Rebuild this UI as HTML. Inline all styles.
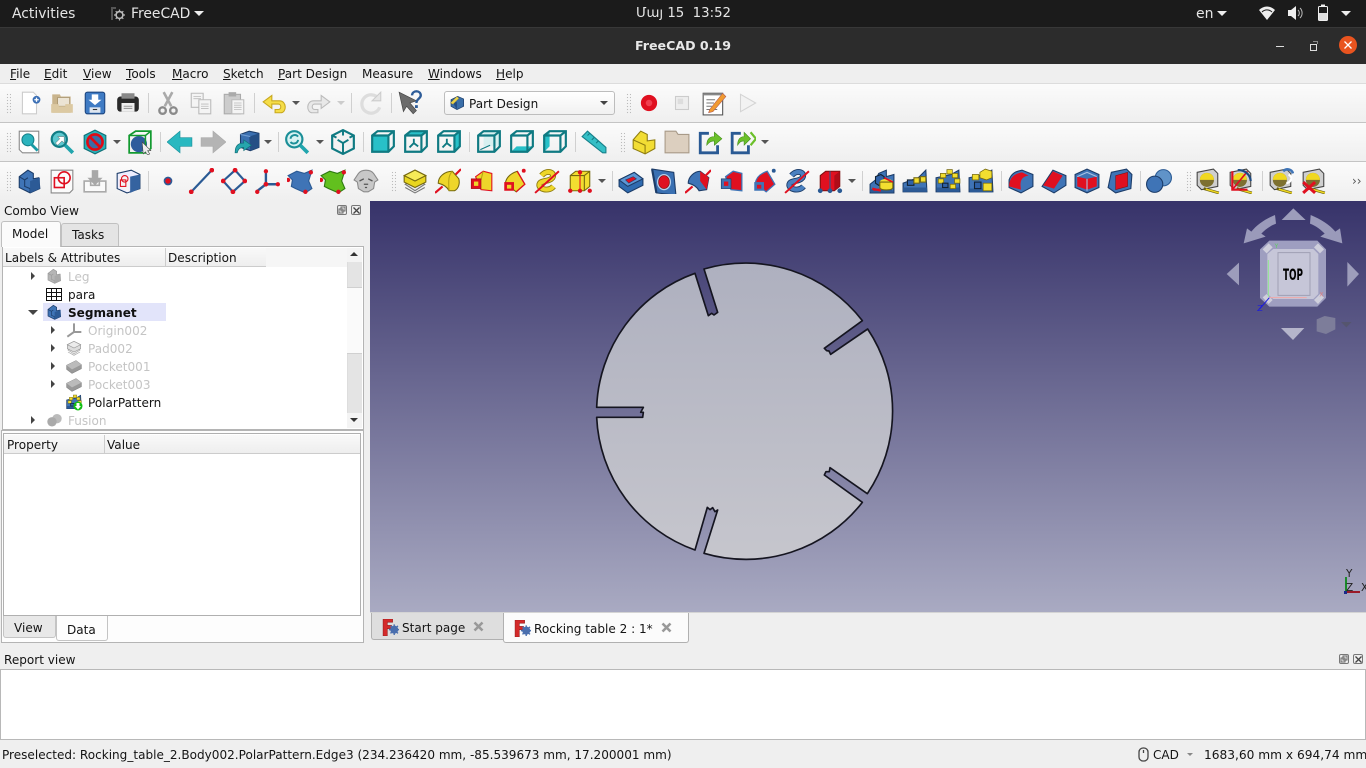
<!DOCTYPE html>
<html><head><meta charset="utf-8"><title>FreeCAD 0.19</title>
<style>
html,body{margin:0;padding:0;width:1366px;height:768px;overflow:hidden;background:#efefef}
body{font-family:"DejaVu Sans","Liberation Sans",sans-serif;font-size:12.05px;color:#141414;position:relative}
div,span.t,svg.a{position:absolute}
.t{position:absolute;white-space:nowrap;line-height:18px;margin-top:1px}
.tb{left:0;width:1366px;background:linear-gradient(#fbfbfb,#efefef);border-bottom:1px solid #c4c4c4;box-sizing:border-box}
svg.i{position:absolute;width:26px;height:26px;overflow:visible}
.g{color:#c4c4c4}
.sep{width:1px;background:#d0d0d0}
.dots{width:5px;background-image:radial-gradient(#bbb 0.7px,transparent 0.8px);background-size:3px 3px}
.ar{width:0;height:0;border-left:4px solid transparent;border-right:4px solid transparent;border-top:4px solid #555}
.ad{border-top-color:#ccc}
.tw{width:0;height:0;border-top:4px solid transparent;border-bottom:4px solid transparent;border-left:4px solid #444}
.td{width:0;height:0;border-left:5px solid transparent;border-right:5px solid transparent;border-top:5px solid #444}
.dk{width:8px;height:8px;border:1px solid #777;border-radius:2px;background:#eee}
</style></head><body>
<svg width="0" height="0" style="position:absolute">
<defs>
<symbol id="new" viewBox="0 0 24 24"><path d="M5 2h10l3 3v17H5z" fill="#fff" stroke="#ccc"/><circle cx="18" cy="9" r="3.6" fill="#3b6fb5"/><path d="M16 9h4M18 7v4" stroke="#fff" stroke-width="1.2"/></symbol>
<symbol id="open" viewBox="0 0 24 24"><path d="M3 21V4h7l1 2h9v15z" fill="#c9b48c"/><path d="M8 7h11v8H8z" fill="#ece4d4" stroke="#a08c66" stroke-width=".6"/><path d="M2 13h7v2h6v-2h7v8H2z" fill="#dcc9a2"/></symbol>
<symbol id="save" viewBox="0 0 24 24"><rect x="3" y="2" width="18" height="20" rx="2" fill="#3f7bc4" stroke="#1d4680"/><path d="M9 4h6v5h3l-6 5-6-5h3z" fill="#fff"/><rect x="7" y="16" width="10" height="5" fill="#dfe6ef"/><path d="M10 18h4" stroke="#333"/></symbol>
<symbol id="print" viewBox="0 0 24 24"><rect x="2" y="6" width="20" height="14" rx="3" fill="#2a2a2a"/><rect x="6" y="3" width="12" height="5" fill="#888"/><rect x="6" y="12" width="12" height="8" fill="#eee"/><path d="M8 15h8M8 17h8" stroke="#999"/></symbol>
<symbol id="cut" viewBox="0 0 24 24" fill="none" stroke="#aaa"><path d="M8 2l7 13M16 2L9 15" stroke-width="2.4"/><circle cx="7" cy="19" r="3" stroke-width="2.2" stroke="#8a8a8a"/><circle cx="17" cy="19" r="3" stroke-width="2.2" stroke="#8a8a8a"/></symbol>
<symbol id="copy" viewBox="0 0 24 24"><path d="M3 3h11v13H3z" fill="#f4f4f4" stroke="#bbb"/><path d="M10 9h11v13H10z" fill="#f4f4f4" stroke="#bbb"/><path d="M5 6h7M5 8h7M12 13h7M12 15h7M12 17h7" stroke="#bbb" stroke-width=".8"/></symbol>
<symbol id="paste" viewBox="0 0 24 24"><rect x="3" y="4" width="15" height="18" fill="#ccc" stroke="#aaa"/><rect x="7" y="2" width="7" height="4" fill="#aaa"/><path d="M10 9h11v13H10z" fill="#f4f4f4" stroke="#bbb"/><path d="M12 12h7M12 14h7M12 16h7M12 18h7" stroke="#bbb" stroke-width=".8"/></symbol>
<symbol id="undo" viewBox="0 0 24 24"><path d="M10 5L2 11l8 6v-4h6c3 0 3 5 0 5h-3v3h5c6 0 6-11-1-11h-7z" fill="#f5dd48" stroke="#c8a81e"/></symbol>
<symbol id="redo" viewBox="0 0 24 24"><path d="M14 5l8 6-8 6v-4H8c-3 0-3 5 0 5h3v3H6c-6 0-6-11 1-11h7z" fill="#e8e8e8" stroke="#bbb"/></symbol>
<symbol id="refresh" viewBox="0 0 24 24"><path d="M19 8a8.5 8.5 0 1 0 1 8" fill="none" stroke="#ddd" stroke-width="3"/><path d="M21 2v8h-8z" fill="#e6e6e6" stroke="#ccc"/></symbol>
<symbol id="help" viewBox="0 0 24 24"><path d="M1 2l16 8-6 2 6 7-3 3-6-7-3 5z" fill="#6b6b6b" stroke="#444" stroke-width=".6"/><path d="M13 5c0-5 8-5 8 0 0 3-4 3-4 7" fill="none" stroke="#2d5c98" stroke-width="2.2"/><rect x="15.7" y="14" width="2.6" height="2.6" fill="#2d5c98"/></symbol>
<symbol id="pd" viewBox="0 0 24 24"><path d="M3 7l10-5 9 4v11l-10 5-9-5z" fill="#3a6ea8" stroke="#1c3c68"/><path d="M3 7l9 4v11" fill="#254f85"/><path d="M2 12L12 2l3 3L6 14z" fill="#ecd44a" stroke="#554"  stroke-width=".6"/></symbol>
<symbol id="rec" viewBox="0 0 24 24"><circle cx="12" cy="12" r="7.5" fill="#e01020"/><circle cx="12" cy="12" r="3" fill="#f04050"/></symbol>
<symbol id="stop" viewBox="0 0 24 24"><rect x="6" y="6" width="12" height="12" fill="#eee" stroke="#ccc"/><rect x="8" y="8" width="5" height="5" fill="#ddd"/></symbol>
<symbol id="macro" viewBox="0 0 24 24"><rect x="2" y="3" width="18" height="20" fill="#fff" stroke="#555"/><path d="M2 3h18v2H2z" fill="#888"/><path d="M5 9h8M5 12h7M5 15h5M5 18h10" stroke="#777"/><path d="M8 18L20 3l3 3L11 20l-4 1z" fill="#f09a30" stroke="#a55" stroke-width=".5"/></symbol>
<symbol id="play" viewBox="0 0 24 24"><path d="M6 4l14 8-14 8z" fill="#f2f2f2" stroke="#d4d4d4"/></symbol>
<symbol id="fitall" viewBox="0 0 24 24"><path d="M3 2h18v20H6l-3-3z" fill="#fdfdfd" stroke="#888"/><circle cx="11" cy="10" r="5.5" fill="#2bb3bd" stroke="#137f88"/><path d="M14 14l6 6" stroke="#1a9aa4" stroke-width="2.6"/></symbol>
<symbol id="fitsel" viewBox="0 0 24 24"><circle cx="9.500" cy="9.500" r="7" fill="#5cc8cf" stroke="#117d85" stroke-width="2"/><path d="M15 15l7 7" stroke="#21a5ad" stroke-width="3.4"/><path d="M6 13l4-4-2-2h6v6l-2-2-4 4z" fill="#fff" stroke="#555" stroke-width=".4"/></symbol>
<symbol id="draw" viewBox="0 0 24 24"><path d="M12 1l10 5v12l-10 5-10-5V6z" fill="#27b0b8" stroke="#106f76"/><circle cx="12" cy="12" r="7" fill="#3a6ea8" stroke="#e00a14" stroke-width="2.4"/><path d="M7 7l10 10" stroke="#e00a14" stroke-width="2.4"/></symbol>
<symbol id="bbox" viewBox="0 0 24 24"><path d="M2 6l6-4h14v16l-5 4H2z" fill="none" stroke="#129a30" stroke-width="1.6"/><circle cx="11" cy="14" r="7.500" fill="#2e5c9c"/><path d="M2 6h15v16M17 6l5-4" fill="none" stroke="#129a30" stroke-width="1.4"/><path d="M14 12l8 8-3 0 2 3-2 1-2-3-2 2z" fill="#eee" stroke="#444" stroke-width=".5"/></symbol>
<symbol id="back" viewBox="0 0 24 24"><path d="M12 2L0 12l12 10v-6h11V8H12z" fill="#29b8c0" stroke="#18909a" stroke-width=".6"/></symbol>
<symbol id="fwd" viewBox="0 0 24 24"><path d="M12 2l12 10-12 10v-6H1V8h11z" fill="#b4b4b4" stroke="#aaa" stroke-width=".6"/></symbol>
<symbol id="sync" viewBox="0 0 24 24"><path d="M6 5l8-3 9 2v13l-8 3-9-3z" fill="#3a6fb0" stroke="#1c3c68"/><path d="M14 7l9-3v13l-8 3z" fill="#254f85"/><path d="M6 5l9 2" stroke="#6f9bd0"/><path d="M1 22c0-8 4-9 8-9v-3l7 5-7 5v-3c-3 0-5 1-6 5z" fill="#26a5ad" stroke="#0f6e75" stroke-width=".6"/></symbol>
<symbol id="zoom" viewBox="0 0 24 24"><circle cx="9.500" cy="9.500" r="7.500" fill="#d8f2f2" stroke="#1b8f98" stroke-width="2"/><path d="M15 15l7 7" stroke="#21a5ad" stroke-width="3.4"/><path d="M6 9a4 4 0 0 1 7-2M13 10a4 4 0 0 1-7 2" fill="none" stroke="#1b8f98" stroke-width="1.8"/></symbol>
<symbol id="iso" viewBox="0 0 24 24"><path d="M12 1l10 5v12l-10 5L2 18V6z" fill="#f2f2f2" stroke="#0f7a82" stroke-width="2"/><path d="M12 1v5M2 6l4 2M22 6l-4 2M12 23v-5M12 13v5M12 13l-5-3M12 13l5-3" stroke="#0f7a82" stroke-width="1.800" fill="none"/></symbol>
<g id="wb"><path d="M2 6l5-4h15v14l-5 5H2zM2 6h15v15M17 6l5-4" fill="none" stroke="#0f7a82" stroke-width="2"/></g>
<g id="ym"><path d="M10 13v-4M10 13l-4 4M10 13l4 3" stroke="#0f7a82" stroke-width="1.700" fill="none"/></g>
<symbol id="front" viewBox="0 0 24 24"><path d="M2 6h15v15H2z" fill="#28c0c8"/><use href="#wb"/></symbol>
<symbol id="top" viewBox="0 0 24 24"><path d="M2 6l5-4h15l-5 4z" fill="#28c0c8"/><use href="#ym"/><use href="#wb"/></symbol>
<symbol id="right" viewBox="0 0 24 24"><path d="M17 6l5-4v14l-5 5z" fill="#28c0c8"/><use href="#ym"/><use href="#wb"/></symbol>
<symbol id="rear" viewBox="0 0 24 24"><path d="M7 2h15v14H7z" fill="#d8f0f0"/><path d="M4 19l9-4" stroke="#0f7a82"/><use href="#wb"/></symbol>
<symbol id="bottom" viewBox="0 0 24 24"><path d="M7 16h15l-5 5H2z" fill="#28c0c8"/><use href="#wb"/></symbol>
<symbol id="left" viewBox="0 0 24 24"><path d="M2 6l5-4v14l-5 5z" fill="#28c0c8"/><use href="#wb"/></symbol>
<symbol id="ruler" viewBox="0 0 24 24"><path d="M1 7l5-5 17 15v5h-3z" fill="#35bfc6" stroke="#17808a"/><path d="M6 6l2-2M10 10l2-2M14 13l2-2" stroke="#147a82"/></symbol>
<symbol id="part" viewBox="0 0 24 24"><path d="M2 10l7-8 6 3v6l7-1v8l-9 5-11-5z" fill="#f2dd34" stroke="#8f7d10"/><path d="M2 10l11 5v8" fill="none" stroke="#8f7d10"/></symbol>
<symbol id="folder" viewBox="0 0 24 24"><path d="M1 22V2h10l2 3h10v17z" fill="#dccfbf" stroke="#a89a88"/></symbol>
<symbol id="link" viewBox="0 0 24 24"><path d="M11 4H3v18h16v-7" fill="none" stroke="#2a5a94" stroke-width="2.600"/><path d="M9 15c0-6 3-8 7-8V3l7 6-7 6v-4c-3 0-5 1-7 4z" fill="#6cc02a" stroke="#3c8a14" stroke-width=".5"/></symbol>
<symbol id="link2" viewBox="0 0 24 24"><path d="M10 4H2v18h15v-7" fill="none" stroke="#2a5a94" stroke-width="2.600"/><path d="M7 15c0-6 3-8 6-8V3l6 6-6 6v-4c-3 0-4 1-6 4z" fill="#6cc02a" stroke="#3c8a14" stroke-width=".5"/><path d="M19 3l5 6-5 6" fill="none" stroke="#6cc02a" stroke-width="2"/></symbol>
<symbol id="body" viewBox="0 0 24 24"><path d="M3 8l8-6 5 3v5l5-1 1 10-9 4-10-5z" fill="#3f74b6" stroke="#1c3c68"/><path d="M3 8l5 3v6l5 2v4M8 11l3-2" fill="none" stroke="#1c3c68"/><path d="M13 12l9-3v10l-9 4z" fill="#2c5a96"/></symbol>
<symbol id="sketch" viewBox="0 0 24 24"><path d="M2 2h20v18l-3 3H2z" fill="#fbfbfb" stroke="#888"/><circle cx="14" cy="9" r="5.500" fill="none" stroke="#e01020" stroke-width="1.500"/><rect x="5" y="9" width="9" height="9" fill="none" stroke="#e01020" stroke-width="1.500"/></symbol>
<symbol id="attach" viewBox="0 0 24 24"><path d="M2 12h6v4h8v-4h6v10H2z" fill="#fafafa" stroke="#aaa" stroke-width="1.500"/><path d="M9 2h6v7h4l-7 7-7-7h4z" fill="#a8a8a8"/></symbol>
<symbol id="map" viewBox="0 0 24 24"><path d="M2 5l13-3 8 4v13l-12 4-9-4z" fill="#eef" stroke="#1c3c68"/><path d="M14 8l9-2v13l-9 4z" fill="#3563a0"/><path d="M4 6l9 3v13l-9-4z" fill="#f4f4f4"/><rect x="5" y="11" width="5" height="6" fill="none" stroke="#e01020"/><circle cx="9" cy="10" r="3" fill="none" stroke="#e01020"/></symbol>
<symbol id="point" viewBox="0 0 24 24"><circle cx="12" cy="12" r="4" fill="#2b5a96"/><circle cx="12" cy="12" r="2.500" fill="#e01020"/></symbol>
<symbol id="line" viewBox="0 0 24 24"><path d="M3 22L22 2" stroke="#2a5a94" stroke-width="2"/><circle cx="3" cy="22" r="2.200" fill="#e01020"/><circle cx="22" cy="2" r="2.200" fill="#e01020"/></symbol>
<symbol id="plane" viewBox="0 0 24 24"><path d="M2 12L13 2l9 10-11 10z" fill="none" stroke="#2a5a94" stroke-width="2"/><circle cx="2" cy="12" r="2.200" fill="#e01020"/><circle cx="13" cy="2" r="2.200" fill="#e01020"/><circle cx="22" cy="12" r="2.200" fill="#e01020"/><circle cx="11" cy="22" r="2.200" fill="#e01020"/></symbol>
<symbol id="lcs" viewBox="0 0 24 24"><path d="M11 2v13L2 22M11 15h11" fill="none" stroke="#2a5a94" stroke-width="2.200"/><circle cx="11" cy="3" r="2" fill="#e01020"/><circle cx="11" cy="15" r="2.200" fill="#e01020"/><circle cx="22" cy="15" r="2" fill="#e01020"/><circle cx="3" cy="22" r="2" fill="#e01020"/></symbol>
<symbol id="binder" viewBox="0 0 24 24"><path d="M1 7l8-4 7 2 7-3-3 10 3 7-6 4-9-4-4-2 1-6z" fill="#3f74b6" stroke="#2a5a94"/><circle cx="22" cy="4" r="2" fill="#e01020"/><circle cx="1" cy="11" r="2" fill="#e01020"/><circle cx="17" cy="22" r="2" fill="#e01020"/></symbol>
<symbol id="sub" viewBox="0 0 24 24"><path d="M1 7l8-4 7 2 7-3-3 10 3 7-6 4-9-4-4-2 1-6z" fill="#62c01e" stroke="#2d7a10"/><circle cx="22" cy="4" r="2" fill="#e01020"/><circle cx="1" cy="11" r="2" fill="#e01020"/><circle cx="17" cy="22" r="2" fill="#e01020"/></symbol>
<symbol id="clone" viewBox="0 0 24 24"><path d="M5 5c3-4 11-4 14 0l4 6-3 2-1 6-5 3h-4l-5-3-1-6-3-2z" fill="#c8c8c8" stroke="#8a8a8a"/><path d="M6 12l4-2M18 12l-4-2M10 15h4M11 18h2" stroke="#555" stroke-width="1.200"/></symbol>
<g id="pad0"><path d="M3 15l9-5 9 5-9 6z" fill="#e8e8e8" stroke="#777"/><path d="M3 18l9 5 9-5" fill="none" stroke="#777"/></g>
<symbol id="pad" viewBox="0 0 24 24"><use href="#pad0"/><path d="M2 7l10-5 10 5v6l-10 5-10-5z" fill="#e8d520" stroke="#75680e"/><path d="M2 7l10 5 10-5-10-5z" fill="#f6ea58" stroke="#75680e"/></symbol>
<symbol id="rev" viewBox="0 0 24 24"><path d="M3 14C3 8 9 3 16 3l6 7c1 4 0 9-4 11h-5c-2-4-6-6-10-7z" fill="#eed62a" stroke="#75680e"/><path d="M16 3c-3 3-4 7-3 18" fill="none" stroke="#b8a414"/><path d="M0 23l7-6M19 6l5-5" stroke="#e01020" stroke-width="2"/></symbol>
<symbol id="loft" viewBox="0 0 24 24"><path d="M7 8l7-5 8 2v16l-10-1z" fill="#eed62a" stroke="#e01020"/><path d="M14 3l-2 8" stroke="#b8a414"/><rect x="3" y="10" width="9" height="9" fill="#e01020" stroke="#a00c18" stroke-width=".6"/><rect x="5.500" y="12.500" width="4" height="4" fill="#eed62a"/></symbol>
<symbol id="pipe" viewBox="0 0 24 24"><path d="M4 14C5 8 9 5 15 3l7 12-8 7z" fill="#eed62a" stroke="#75680e"/><path d="M15 3l7 12-8 7" fill="none" stroke="#e01020" stroke-width="1.200"/><rect x="3" y="13" width="9" height="8" fill="#e01020"/><rect x="5.500" y="15.500" width="4" height="3.500" fill="#eed62a"/><circle cx="21" cy="2.500" r="1.800" fill="#e01020"/></symbol>
<symbol id="helix" viewBox="0 0 24 24"><path d="M7 7C12 1 20 4 17 9 14 13 6 11 5 15c-1 5 9 7 13 2" fill="none" stroke="#8f7d10" stroke-width="5.500"/><path d="M7 7C12 1 20 4 17 9 14 13 6 11 5 15c-1 5 9 7 13 2" fill="none" stroke="#eed62a" stroke-width="3.800"/><path d="M1 23L23 3" stroke="#e01020" stroke-width="1.800"/></symbol>
<symbol id="prim" viewBox="0 0 24 24"><path d="M3 7l5-4h13v14l-5 4H3z" fill="#f2de30" stroke="#75680e"/><path d="M3 7h13v14M16 7l5-4" fill="none" stroke="#75680e"/><path d="M12 3v18" stroke="#e01020"/><circle cx="12" cy="4" r="2" fill="#e01020"/><circle cx="3" cy="21" r="2" fill="#e01020"/><circle cx="12" cy="21" r="2" fill="#e01020"/><circle cx="21" cy="21" r="2" fill="#e01020"/></symbol>
<symbol id="pocket" viewBox="0 0 24 24"><path d="M1 11l14-7 8 6v6L9 23 1 17z" fill="#2f6bb0" stroke="#1c3c68"/><path d="M1 11l8 6 14-7-8-6z" fill="#5c96d4" stroke="#1c3c68"/><path d="M7 11l7-3 3 2-7 4z" fill="#e01020" stroke="#1c3c68" stroke-width=".5"/></symbol>
<symbol id="hole" viewBox="0 0 24 24"><path d="M1 1l20 3 2 21-18-2z" fill="#3a70b2" stroke="#1c3c68"/><path d="M1 1l4 22" stroke="#1c3c68" stroke-width="2"/><ellipse cx="12" cy="13" rx="6.500" ry="7.500" fill="#b8d0ea"/><ellipse cx="12" cy="13" rx="5" ry="6" fill="#e01020" stroke="#7a1010" stroke-width=".6"/></symbol>
<symbol id="groove" viewBox="0 0 24 24"><path d="M3 14C3 8 9 3 14 3l8 6-2 11-7 1c-2-4-6-6-10-7z" fill="#3f74b6" stroke="#1c3c68"/><path d="M14 3l8 6-2 11-6-8z" fill="#e01020"/><path d="M0 23l7-6M19 7l5-5" stroke="#e01020" stroke-width="2"/></symbol>
<symbol id="sloft" viewBox="0 0 24 24"><path d="M7 8l7-5 8 2v16l-10-1z" fill="#e01020" stroke="#3f74b6" stroke-width="1.200"/><rect x="3" y="10" width="9" height="9" fill="#3f74b6" stroke="#1c3c68" stroke-width=".6"/><rect x="5.500" y="12.500" width="4" height="4" fill="#e01020"/></symbol>
<symbol id="spipe" viewBox="0 0 24 24"><path d="M4 14C5 8 9 5 15 3l7 12-8 7z" fill="#e01020" stroke="#3f74b6" stroke-width="1.200"/><rect x="3" y="13" width="9" height="8" fill="#3f74b6"/><rect x="5.500" y="15.500" width="4" height="3.500" fill="#e01020"/><circle cx="21" cy="2.500" r="1.800" fill="#2a5a94"/></symbol>
<symbol id="shelix" viewBox="0 0 24 24"><path d="M7 7C12 1 20 4 17 9 14 13 6 11 5 15c-1 5 9 7 13 2" fill="none" stroke="#1c3c68" stroke-width="5.500"/><path d="M7 7C12 1 20 4 17 9 14 13 6 11 5 15c-1 5 9 7 13 2" fill="none" stroke="#4a80c0" stroke-width="3.800"/><path d="M1 23L23 3" stroke="#e01020" stroke-width="1.800"/></symbol>
<symbol id="sprim" viewBox="0 0 24 24"><path d="M3 7l5-4h13v14l-5 4H3z" fill="#e01020" stroke="#7a1010"/><path d="M16 7l5-4v14l-5 4z" fill="#b00c18"/><path d="M12 3v18" stroke="#2a5a94"/><circle cx="3" cy="21" r="2.200" fill="#2a5a94"/><circle cx="12" cy="21" r="2.200" fill="#2a5a94"/><circle cx="21" cy="21" r="2.200" fill="#2a5a94"/></symbol>
<g id="blk"><path d="M1 23V15l5-4 3-6 7-3v6l7-2v17l-9 0z" fill="#3f74b6" stroke="#1c3c68"/><path d="M1 19l10 1 6-4 6 6H1z" fill="#2c5a96"/></g>
<symbol id="mirror" viewBox="0 0 24 24"><use href="#blk"/><path d="M3 19l8 2M4 20h6" stroke="#e01020" stroke-width="2"/><path d="M6 8l5-2 3 2v6l-5 2-3-2z" fill="#2f62a8" stroke="#123"/><ellipse cx="16" cy="13" rx="6" ry="3" fill="#f2de30"/><path d="M10 13v5c0 3 12 3 12 0v-5z" fill="#f2de30" stroke="#75680e"/><path d="M14 9l8 4" stroke="#e01020" stroke-width="1.500"/></symbol>
<symbol id="linear" viewBox="0 0 24 24"><path d="M1 14l14-5 7-7 1 20H1z" fill="#3f74b6" stroke="#1c3c68"/><path d="M1 18l22 0v4H1z" fill="#2c5a96"/><rect x="5" y="11" width="6" height="5" fill="#2f62a8" stroke="#123"/><rect x="11" y="9" width="5" height="5" fill="#f2de30" stroke="#75680e"/><rect x="17" y="8" width="5" height="5" fill="#f2de30" stroke="#75680e"/></symbol>
<symbol id="polar" viewBox="0 0 24 24"><path d="M1 9l14-3 7-4 1 20H1z" fill="#3f74b6" stroke="#1c3c68"/><rect x="1.500" y="18" width="21" height="4" fill="#2c5a96"/><g fill="#f2de30" stroke="#75680e" stroke-width=".7"><rect x="11" y="1.500" width="5" height="4"/><rect x="5" y="5" width="5" height="4"/><rect x="16" y="5" width="5" height="4"/><rect x="3" y="10" width="5" height="4"/><rect x="18" y="10" width="5" height="4"/><rect x="14" y="15" width="5" height="4"/></g><rect x="7" y="14" width="5" height="4" fill="#2f62a8" stroke="#123"/></symbol>
<symbol id="multi" viewBox="0 0 24 24"><path d="M1 9l14-3 7-4 1 20H1z" fill="#3f74b6" stroke="#1c3c68"/><rect x="1.500" y="19" width="21" height="3.500" fill="#2c5a96"/><g fill="#f2de30" stroke="#75680e" stroke-width=".7"><path d="M11 4l5-3 6 2v6l-5 2-6-2z"/><rect x="4" y="6" width="6" height="5"/><rect x="14" y="14" width="8" height="7"/></g><rect x="6" y="13" width="6" height="6" fill="#2f62a8" stroke="#123"/></symbol>
<symbol id="fillet" viewBox="0 0 24 24"><path d="M1 11c2-6 6-8 12-9l10 4v11l-11 6-11-5z" fill="#3f74b6" stroke="#1c3c68"/><path d="M1 17c0-8 5-12 12-13l6 3C11 8 11 14 12 20z" fill="#e01020"/></symbol>
<symbol id="chamfer" viewBox="0 0 24 24"><path d="M1 17L11 2l12 5v9l-11 7z" fill="#3f74b6" stroke="#1c3c68"/><path d="M2 16L11 3l9 4-8 12z" fill="#e01020"/></symbol>
<symbol id="draft" viewBox="0 0 24 24"><path d="M1 6l11-5 11 5v12l-11 5-11-5z" fill="#3f74b6" stroke="#1c3c68"/><path d="M3 8l9 2 9-2v9l-9 3-9-3z" fill="#e01020"/><path d="M12 10v11M3 8l9-4 9 4" stroke="#a8c2e4" fill="none"/></symbol>
<symbol id="thick" viewBox="0 0 24 24"><path d="M4 4l14-3 5 5-1 13-14 4-7-5z" fill="#3f74b6" stroke="#1c3c68"/><path d="M8 7l11-3 0 13-11 3z" fill="#e01020" stroke="#7a1010" stroke-width=".5"/></symbol>
<symbol id="bool" viewBox="0 0 24 24"><circle cx="16" cy="9" r="7.500" fill="#6093c8" stroke="#2a5a94"/><circle cx="8" cy="15" r="7.500" fill="#3f74b6" stroke="#1c3c68"/></symbol>
<g id="tape"><path d="M2 4l15-3 4 4v12l-15 3-4-4z" fill="#cfcfcf" stroke="#444"/><circle cx="11" cy="11" r="6.500" fill="#7d7030"/><path d="M4.500 11a6.500 6.500 0 0 1 13 0z" fill="#f0d820"/><path d="M8 19l14 4" stroke="#6a6010" stroke-width="2.600"/><path d="M10 19.500l12 3.500" stroke="#f0d820" stroke-width="1.400"/></g>
<symbol id="m1" viewBox="0 0 24 24"><use href="#tape"/></symbol>
<symbol id="m2" viewBox="0 0 24 24"><use href="#tape"/><path d="M4 3v17h14" fill="none" stroke="#e01020" stroke-width="2"/><path d="M4 20L18 3" stroke="#e01020" stroke-width="1.500"/><path d="M9 2a11 11 0 0 1 12 10" fill="none" stroke="#1c4a82" stroke-width="2"/></symbol>
<symbol id="m3" viewBox="0 0 24 24"><use href="#tape"/><path d="M14 3c3-3 8-2 9 2" fill="none" stroke="#3f74b6" stroke-width="2.400"/><path d="M19 6c4 2 3 7-2 8" fill="none" stroke="#fff" stroke-width="2"/></symbol>
<symbol id="m4" viewBox="0 0 24 24"><use href="#tape"/><path d="M2 13l11 10M13 13L2 23" stroke="#e01020" stroke-width="2.800"/></symbol>
<symbol id="fc" viewBox="0 0 16 16"><path d="M1 0h9v3H5v3h4v3H5v7H1z" fill="#d42a2a" stroke="#8e1616" stroke-width=".5"/><circle cx="11.500" cy="10" r="3.800" fill="#4a6fae"/><circle cx="11.500" cy="10" r="1.400" fill="#dbe4f2"/><path d="M11.500 5v10M6.500 10h10M8 6.500l7 7M15 6.500l-7 7" stroke="#4a6fae" stroke-width="1.300"/></symbol>
</defs></svg>

<!-- top bar -->
<div style="left:0;top:0;width:1366px;height:27px;background:#1b1b1b;border-bottom:1px solid #383838"></div>
<span class="t" style="left:12px;top:4px;color:#e6e6e6;font-size:13.900px">Activities</span>
<svg class="a" style="left:110px;top:6px" width="16" height="16" viewBox="0 0 16 16"><path d="M1 1h5v2H3v11H1z" fill="#555"/><circle cx="9.500" cy="9" r="3.400" fill="none" stroke="#bbb" stroke-width="1.600"/><path d="M9.500 3.500v2M9.500 12.500v2M4 9h2M13 9h2M5.700 5.200l1.300 1.300M12 11.500l1.300 1.300M13.300 5.200L12 6.500M7 11.500l-1.300 1.300" stroke="#bbb" stroke-width="1.200"/></svg>
<span class="t" style="left:131px;top:4px;color:#e6e6e6;font-size:13.900px">FreeCAD</span>
<div style="left:194px;top:11px;width:0;height:0;border-left:5px solid transparent;border-right:5px solid transparent;border-top:5px solid #eee"></div>
<span class="t" style="left:636px;top:4px;color:#e6e6e6;font-size:13.300px">Մայ 15&nbsp; 13:52</span>
<span class="t" style="left:1196px;top:4px;color:#e6e6e6;font-size:14px">en</span>
<div style="left:1217px;top:11px;width:0;height:0;border-left:5px solid transparent;border-right:5px solid transparent;border-top:5px solid #eee"></div>
<svg class="a" style="left:1258px;top:5px" width="18" height="16" viewBox="0 0 18 16"><path d="M1 5a11 11 0 0 1 16 0l-8 10z" fill="#eee"/><path d="M4 7a7 7 0 0 1 10 0" stroke="#1b1b1b" stroke-width="1" fill="none"/></svg>
<svg class="a" style="left:1287px;top:5px" width="16" height="16" viewBox="0 0 16 16"><path d="M1 5h3l5-4v14l-5-4H1z" fill="#eee"/><path d="M11 5a4 4 0 0 1 0 6M13 3a7 7 0 0 1 0 10" stroke="#bbb" fill="none"/></svg>
<svg class="a" style="left:1317px;top:4px" width="12" height="18" viewBox="0 0 12 18"><rect x="1.500" y="2.500" width="9" height="14" rx="1" fill="none" stroke="#eee"/><rect x="4" y="0.500" width="4" height="2" fill="#eee"/><rect x="2" y="9" width="8" height="7" fill="#ddd"/></svg>
<div style="left:1341px;top:11px;width:0;height:0;border-left:5px solid transparent;border-right:5px solid transparent;border-top:5px solid #eee"></div>

<!-- title bar -->
<div style="left:0;top:28px;width:1366px;height:36px;background:#2c2c2c"></div>
<span class="t" style="left:635px;top:36px;color:#e8e8e8;font-size:12.600px;font-weight:bold">FreeCAD 0.19</span>
<div style="left:1276px;top:46px;width:8px;height:1px;background:#ddd"></div>
<div style="left:1310px;top:44px;width:5px;height:5px;border:1px solid #ddd"></div>
<div style="left:1313px;top:41px;width:4px;height:2px;border:1px solid #888;border-bottom:none;border-left:none"></div>
<div style="left:1339px;top:36px;width:18px;height:18px;border-radius:9px;background:#e9541f"></div>
<svg class="a" style="left:1339px;top:36px" width="18" height="18"><path d="M5.500 5.500l7 7M12.500 5.500l-7 7" stroke="#fff" stroke-width="1.300"/></svg>

<!-- menu bar -->
<div style="left:0;top:64px;width:1366px;height:20px;background:#efefef;border-bottom:1px solid #dcdcdc;box-sizing:border-box"></div>
<span class="t" style="left:10px;top:64px"><u>F</u>ile</span>
<span class="t" style="left:44px;top:64px"><u>E</u>dit</span>
<span class="t" style="left:83px;top:64px"><u>V</u>iew</span>
<span class="t" style="left:126px;top:64px"><u>T</u>ools</span>
<span class="t" style="left:172px;top:64px"><u>M</u>acro</span>
<span class="t" style="left:223px;top:64px"><u>S</u>ketch</span>
<span class="t" style="left:278px;top:64px"><u>P</u>art Design</span>
<span class="t" style="left:362px;top:64px">Measure</span>
<span class="t" style="left:428px;top:64px"><u>W</u>indows</span>
<span class="t" style="left:496px;top:64px"><u>H</u>elp</span>

<!-- toolbars -->
<div class="tb" style="top:84px;height:39px"></div>
<div class="tb" style="top:123px;height:39px"></div>
<div class="tb" style="top:162px;height:39px;border-bottom:none"></div>
<div class="dots" style="left:6px;top:93px;height:21px"></div>
<div class="dots" style="left:6px;top:132px;height:21px"></div>
<div class="dots" style="left:6px;top:171px;height:21px"></div>
<div class="sep" style="left:148px;top:93px;height:20px"></div>
<div class="sep" style="left:254px;top:93px;height:20px"></div>
<div class="sep" style="left:351px;top:93px;height:20px"></div>
<div class="sep" style="left:391px;top:93px;height:20px"></div>
<div class="dots" style="left:626px;top:93px;height:21px"></div>
<div class="sep" style="left:160px;top:132px;height:20px"></div>
<div class="sep" style="left:278px;top:132px;height:20px"></div>
<div class="sep" style="left:363px;top:132px;height:20px"></div>
<div class="sep" style="left:469px;top:132px;height:20px"></div>
<div class="sep" style="left:575px;top:132px;height:20px"></div>
<div class="dots" style="left:620px;top:132px;height:21px"></div>
<div class="sep" style="left:148px;top:171px;height:20px"></div>
<div class="dots" style="left:391px;top:171px;height:21px"></div>
<div class="sep" style="left:612px;top:171px;height:20px"></div>
<div class="sep" style="left:862px;top:171px;height:20px"></div>
<div class="sep" style="left:1001px;top:171px;height:20px"></div>
<div class="sep" style="left:1140px;top:171px;height:20px"></div>
<div class="dots" style="left:1186px;top:171px;height:21px"></div>
<div class="sep" style="left:1262px;top:171px;height:20px"></div>

<!-- row 1 icons -->
<svg class="i" style="left:17px;top:90px"><use href="#new"/></svg>
<svg class="i" style="left:49px;top:90px"><use href="#open"/></svg>
<svg class="i" style="left:82px;top:90px"><use href="#save"/></svg>
<svg class="i" style="left:115px;top:90px"><use href="#print"/></svg>
<svg class="i" style="left:155px;top:90px"><use href="#cut"/></svg>
<svg class="i" style="left:188px;top:90px"><use href="#copy"/></svg>
<svg class="i" style="left:221px;top:90px"><use href="#paste"/></svg>
<svg class="i" style="left:261px;top:90px"><use href="#undo"/></svg>
<div class="ar" style="left:292px;top:101px"></div>
<svg class="i" style="left:306px;top:90px"><use href="#redo"/></svg>
<div class="ar ad" style="left:337px;top:101px"></div>
<svg class="i" style="left:358px;top:90px"><use href="#refresh"/></svg>
<svg class="i" style="left:398px;top:90px"><use href="#help"/></svg>
<div style="left:444px;top:91px;width:171px;height:24px;box-sizing:border-box;border:1px solid #bdbdbd;border-radius:3px;background:linear-gradient(#fff,#f1f1f1)"></div>
<svg class="a" style="left:449px;top:95px" width="16" height="16"><use href="#pd"/></svg>
<span class="t" style="left:469px;top:94px">Part Design</span>
<div class="ar" style="left:600px;top:101px;border-top-color:#444"></div>
<svg class="i" style="left:636px;top:90px"><use href="#rec"/></svg>
<svg class="i" style="left:669px;top:90px"><use href="#stop"/></svg>
<svg class="i" style="left:701px;top:90px"><use href="#macro"/></svg>
<svg class="i" style="left:734px;top:90px"><use href="#play"/></svg>

<!-- row 2 icons -->
<svg class="i" style="left:16px;top:129px"><use href="#fitall"/></svg>
<svg class="i" style="left:49px;top:129px"><use href="#fitsel"/></svg>
<svg class="i" style="left:82px;top:129px"><use href="#draw"/></svg>
<div class="ar" style="left:113px;top:140px"></div>
<svg class="i" style="left:127px;top:129px"><use href="#bbox"/></svg>
<svg class="i" style="left:167px;top:129px"><use href="#back"/></svg>
<svg class="i" style="left:200px;top:129px"><use href="#fwd"/></svg>
<svg class="i" style="left:234px;top:129px"><use href="#sync"/></svg>
<div class="ar" style="left:264px;top:140px"></div>
<svg class="i" style="left:284px;top:129px"><use href="#zoom"/></svg>
<div class="ar" style="left:316px;top:140px"></div>
<svg class="i" style="left:330px;top:129px"><use href="#iso"/></svg>
<svg class="i" style="left:370px;top:129px"><use href="#front"/></svg>
<svg class="i" style="left:403px;top:129px"><use href="#top"/></svg>
<svg class="i" style="left:436px;top:129px"><use href="#right"/></svg>
<svg class="i" style="left:476px;top:129px"><use href="#rear"/></svg>
<svg class="i" style="left:509px;top:129px"><use href="#bottom"/></svg>
<svg class="i" style="left:542px;top:129px"><use href="#left"/></svg>
<svg class="i" style="left:581px;top:129px"><use href="#ruler"/></svg>
<svg class="i" style="left:631px;top:129px"><use href="#part"/></svg>
<svg class="i" style="left:664px;top:129px"><use href="#folder"/></svg>
<svg class="i" style="left:697px;top:129px"><use href="#link"/></svg>
<svg class="i" style="left:730px;top:129px"><use href="#link2"/></svg>
<div class="ar" style="left:761px;top:140px"></div>

<!-- row 3 icons -->
<svg class="i" style="left:16px;top:168px"><use href="#body"/></svg>
<svg class="i" style="left:49px;top:168px"><use href="#sketch"/></svg>
<svg class="i" style="left:82px;top:168px"><use href="#attach"/></svg>
<svg class="i" style="left:115px;top:168px"><use href="#map"/></svg>
<svg class="i" style="left:155px;top:168px"><use href="#point"/></svg>
<svg class="i" style="left:188px;top:168px"><use href="#line"/></svg>
<svg class="i" style="left:221px;top:168px"><use href="#plane"/></svg>
<svg class="i" style="left:254px;top:168px"><use href="#lcs"/></svg>
<svg class="i" style="left:287px;top:168px"><use href="#binder"/></svg>
<svg class="i" style="left:320px;top:168px"><use href="#sub"/></svg>
<svg class="i" style="left:353px;top:168px"><use href="#clone"/></svg>
<svg class="i" style="left:402px;top:168px"><use href="#pad"/></svg>
<svg class="i" style="left:435px;top:168px"><use href="#rev"/></svg>
<svg class="i" style="left:468px;top:168px"><use href="#loft"/></svg>
<svg class="i" style="left:501px;top:168px"><use href="#pipe"/></svg>
<svg class="i" style="left:534px;top:168px"><use href="#helix"/></svg>
<svg class="i" style="left:567px;top:168px"><use href="#prim"/></svg>
<div class="ar" style="left:598px;top:179px"></div>
<svg class="i" style="left:618px;top:168px"><use href="#pocket"/></svg>
<svg class="i" style="left:651px;top:168px"><use href="#hole"/></svg>
<svg class="i" style="left:685px;top:168px"><use href="#groove"/></svg>
<svg class="i" style="left:718px;top:168px"><use href="#sloft"/></svg>
<svg class="i" style="left:751px;top:168px"><use href="#spipe"/></svg>
<svg class="i" style="left:784px;top:168px"><use href="#shelix"/></svg>
<svg class="i" style="left:817px;top:168px"><use href="#sprim"/></svg>
<div class="ar" style="left:848px;top:179px"></div>
<svg class="i" style="left:869px;top:168px"><use href="#mirror"/></svg>
<svg class="i" style="left:902px;top:168px"><use href="#linear"/></svg>
<svg class="i" style="left:935px;top:168px"><use href="#polar"/></svg>
<svg class="i" style="left:968px;top:168px"><use href="#multi"/></svg>
<svg class="i" style="left:1008px;top:168px"><use href="#fillet"/></svg>
<svg class="i" style="left:1041px;top:168px"><use href="#chamfer"/></svg>
<svg class="i" style="left:1074px;top:168px"><use href="#draft"/></svg>
<svg class="i" style="left:1107px;top:168px"><use href="#thick"/></svg>
<svg class="i" style="left:1146px;top:168px"><use href="#bool"/></svg>
<svg class="i" style="left:1195px;top:168px"><use href="#m1"/></svg>
<svg class="i" style="left:1228px;top:168px"><use href="#m2"/></svg>
<svg class="i" style="left:1268px;top:168px"><use href="#m3"/></svg>
<svg class="i" style="left:1301px;top:168px"><use href="#m4"/></svg>
<span class="t" style="left:1352px;top:171px;color:#555;font-size:12px">››</span>

<!-- 3D viewport -->
<div style="left:370px;top:201px;width:996px;height:411px;background:linear-gradient(#37336a,#a9aac2)"></div>
<svg class="a" style="left:590px;top:255px" width="310" height="310" viewBox="0 0 930 930">
<defs><linearGradient id="dg" x1="0" y1="0" x2="0" y2="1"><stop offset="0" stop-color="#aeb0bf"/><stop offset="1" stop-color="#c6c6cd"/></linearGradient></defs>
<path d="M342 42A443 443 0 0 1 817 197L703 280L710 287L717 288L722 298L833 222A443 443 0 0 1 832 716L720 638L718 650L708 650L703 660L817 742A443 443 0 0 1 342 895L383 765L375 770L368 758L360 764L352 757L315 885A443 443 0 0 1 20 487L158 487L160 472L152 472L160 457L20 457A443 443 0 0 1 315 55L355 182L365 175L372 180L383 172Z" fill="url(#dg)" stroke="#151520" stroke-width="5" stroke-linejoin="round"/>
</svg>

<!-- nav cube -->
<svg class="a" style="left:860px;top:120px" width="506" height="240" viewBox="0 0 1518 720">
<g fill="#9d9dbb">
<path d="M1300 265l-35 35h72z"/>
<path d="M1100 462l37-34v68z"/>
<path d="M1497 462l-35-36v74z"/>
<path d="M1263 624h70l-34 36z" fill="#b5b5cb"/>
<path d="M1245 285l3 26c-20 8-32 18-44 30l13 9-66 20 10-45 13 10c18-22 42-38 71-50z" fill="#9a9aba"/>
<path d="M1352 285l-2 26c20 8 32 18 44 30l-13 9 66 20-7-45-14 10c-18-22-45-38-74-50z" fill="#9a9aba"/>
</g>
<path d="M1228 362h144l26 26v146l-26 26h-144l-28-26V388z" fill="#9e9ec0"/>
<path d="M1240 387h120l15 15v120l-15 15h-120l-18-15V402z" fill="#c6c6d8"/>
<path d="M1254 398h96v128h-96z" fill="none" stroke="#a0a0b4" stroke-width="3"/>
<g fill="#cfcfdc"><path d="M1208 388l18-18 12 12-18 18z"/><path d="M1392 388l-18-18-12 12 18 18z"/><path d="M1208 532l18 20 12-12-18-18z"/><path d="M1392 532l-18 20-12-12 18-18z"/></g>
<path d="M1225 420v110" stroke="#8fe88f" stroke-width="3"/>
<path d="M1228 533h112" stroke="#f0a8a8" stroke-width="3"/>
<path d="M1228 533l-30 35" stroke="#1a1ae0" stroke-width="3"/>
<path d="M1193 556h14l-14 16h14" stroke="#1a1ae0" fill="none" stroke-width="2"/>
<text x="1244" y="384" fill="#60d060" font-size="18" font-family="DejaVu Sans">Y</text>
<text x="1378" y="530" fill="#e08080" font-size="18" font-family="DejaVu Sans">X</text>
<text x="1269" y="480" font-family="'DejaVu Sans','Liberation Sans',sans-serif" font-size="49" font-weight="bold" textLength="60" lengthAdjust="spacingAndGlyphs" fill="#000">TOP</text>
<path d="M1370 598l24-10 32 6v34l-28 14-28-8z" fill="#7d7d9a"/>
<path d="M1443 606h32l-16 16z" fill="#55556e"/>
</svg>

<!-- axis -->
<div style="left:1345px;top:577px;width:2px;height:15px;background:#1a8a2a"></div>
<div style="left:1345px;top:591px;width:15px;height:2px;background:#9a1a28"></div>
<div style="left:1344px;top:591px;width:3px;height:3px;background:#1a2a8a"></div>
<span class="t" style="left:1346px;top:567px;font-size:10.500px;color:#222;line-height:12px">Y</span>
<span class="t" style="left:1346px;top:581px;font-size:10.500px;color:#222;line-height:12px">Z</span>
<span class="t" style="left:1361px;top:581px;font-size:10.500px;color:#222;line-height:12px">X</span>

<!-- view tabs -->
<div style="left:370px;top:612px;width:996px;height:1px;background:#d4d4d4"></div>
<div style="left:371px;top:613px;width:132px;height:27px;box-sizing:border-box;background:#dedede;border:1px solid #b0b0b0;border-top:none;border-right:none;border-radius:0 0 0 3px"></div>
<div style="left:503px;top:613px;width:186px;height:30px;box-sizing:border-box;background:#fbfbfb;border:1px solid #b0b0b0;border-top:none;border-radius:0 0 3px 3px"></div>
<svg class="a" style="left:382px;top:619px" width="17" height="17"><use href="#fc"/></svg>
<span class="t" style="left:402px;top:618px">Start page</span>
<svg class="a" style="left:473px;top:621px" width="11" height="11"><path d="M1.500 1.500l8 8M9.500 1.500l-8 8" stroke="#999" stroke-width="2.600"/></svg>
<svg class="a" style="left:514px;top:620px" width="17" height="17"><use href="#fc"/></svg>
<span class="t" style="left:534px;top:619px">Rocking table 2 : 1*</span>
<svg class="a" style="left:661px;top:622px" width="11" height="11"><path d="M1.500 1.500l8 8M9.500 1.500l-8 8" stroke="#999" stroke-width="2.600"/></svg>

<!-- combo view -->
<span class="t" style="left:4px;top:201px">Combo View</span>
<div class="dk" style="left:337px;top:205px"></div>
<div class="dk" style="left:351px;top:205px"></div>
<svg class="a" style="left:352px;top:206px" width="9" height="9"><path d="M1.500 1.500l6 6M7.500 1.500l-6 6" stroke="#444" stroke-width="1.300"/></svg>
<svg class="a" style="left:338px;top:206px" width="9" height="9"><rect x="1" y="3" width="4" height="4" fill="none" stroke="#666"/><rect x="3" y="1" width="4" height="4" fill="none" stroke="#666"/></svg>
<div style="left:2px;top:246px;width:362px;height:184px;box-sizing:border-box;background:#fff;border:1px solid #b4b4b4"></div>
<div style="left:61px;top:223px;width:58px;height:23px;box-sizing:border-box;background:#e4e4e4;border:1px solid #c0c0c0;border-bottom:none;border-radius:3px 3px 0 0"></div>
<div style="left:1px;top:221px;width:60px;height:26px;box-sizing:border-box;background:#fbfbfb;border:1px solid #c0c0c0;border-bottom:none;border-radius:3px 3px 0 0"></div>
<span class="t" style="left:12px;top:224px">Model</span>
<span class="t" style="left:72px;top:225px">Tasks</span>
<!-- tree header -->
<div style="left:3px;top:248px;width:344px;height:19px;background:#f6f6f6"></div>
<div style="left:3px;top:248px;width:263px;height:19px;box-sizing:border-box;background:linear-gradient(#f9f9f9,#eee);border-bottom:1px solid #ccc"></div>
<div style="left:165px;top:248px;width:1px;height:18px;background:#ccc"></div>
<span class="t" style="left:5px;top:248px">Labels &amp; Attributes</span>
<span class="t" style="left:168px;top:248px">Description</span>
<!-- scrollbar -->
<div style="left:347px;top:248px;width:15px;height:180px;background:#e4e4e4;border-left:1px solid #ddd;box-sizing:border-box"></div>
<div style="left:347px;top:248px;width:15px;height:14px;background:#f4f4f4"></div>
<div style="left:347px;top:413px;width:15px;height:15px;background:#f4f4f4"></div>
<div style="left:347px;top:287px;width:15px;height:67px;background:#fafafa;border-top:1px solid #d0d0d0;border-bottom:1px solid #d0d0d0;box-sizing:border-box"></div>
<div style="left:350px;top:252px;width:0;height:0;border-left:4px solid transparent;border-right:4px solid transparent;border-bottom:4px solid #333"></div>
<div style="left:350px;top:418px;width:0;height:0;border-left:4px solid transparent;border-right:4px solid transparent;border-top:4px solid #333"></div>
<!-- tree rows -->
<div class="tw" style="left:31px;top:272px"></div>
<svg class="a" style="left:46px;top:268px;filter:grayscale(1);opacity:.5" width="16" height="16"><use href="#body"/></svg>
<span class="t g" style="left:68px;top:267px">Leg</span>
<svg class="a" style="left:46px;top:288px" width="16" height="13"><path d="M.5.500h15v12H.500zM.500 4.500h15M.500 8.500h15M5.500.500v12M10.500.500v12" fill="#fff" stroke="#111"/></svg>
<span class="t" style="left:68px;top:285px">para</span>
<div style="left:43px;top:303px;width:123px;height:18px;background:#e2e4fa"></div>
<div class="td" style="left:28px;top:310px"></div>
<svg class="a" style="left:46px;top:304px" width="16" height="16"><use href="#body"/></svg>
<span class="t" style="left:68px;top:303px;font-weight:bold;color:#111">Segmanet</span>
<div class="tw" style="left:51px;top:326px"></div>
<svg class="a" style="left:66px;top:322px" width="16" height="16" viewBox="0 0 24 24"><path d="M12 2v13L2 22M12 15h11" fill="none" stroke="#999" stroke-width="3"/></svg>
<span class="t g" style="left:88px;top:321px">Origin002</span>
<div class="tw" style="left:51px;top:344px"></div>
<svg class="a" style="left:66px;top:340px;filter:grayscale(1);opacity:.65" width="16" height="16"><use href="#pad"/></svg>
<span class="t g" style="left:88px;top:339px">Pad002</span>
<div class="tw" style="left:51px;top:362px"></div>
<svg class="a" style="left:66px;top:358px" width="16" height="16" viewBox="0 0 24 24"><path d="M1 11l14-7 8 6v6L9 23 1 17z" fill="#999" stroke="#888"/><path d="M1 11l8 6 14-7-8-6z" fill="#bbb"/></svg>
<span class="t g" style="left:88px;top:357px">Pocket001</span>
<div class="tw" style="left:51px;top:380px"></div>
<svg class="a" style="left:66px;top:376px" width="16" height="16" viewBox="0 0 24 24"><path d="M1 11l14-7 8 6v6L9 23 1 17z" fill="#999" stroke="#888"/><path d="M1 11l8 6 14-7-8-6z" fill="#bbb"/></svg>
<span class="t g" style="left:88px;top:375px">Pocket003</span>
<svg class="a" style="left:66px;top:394px" width="16" height="16"><use href="#polar"/></svg>
<svg class="a" style="left:73px;top:401px" width="10" height="10"><circle cx="5" cy="5" r="4.500" fill="#14c014"/><path d="M3.500 2h3v3H8L5 8.500 2 5h1.500z" fill="#fff"/></svg>
<span class="t" style="left:88px;top:393px">PolarPattern</span>
<div class="tw" style="left:31px;top:416px"></div>
<svg class="a" style="left:46px;top:413px" width="17" height="15" viewBox="0 0 24 24"><circle cx="16" cy="9" r="7.500" fill="#bbb"/><circle cx="8" cy="14" r="7.500" fill="#aaa"/></svg>
<span class="t g" style="left:68px;top:411px">Fusion</span>

<!-- property panel -->
<div style="left:1px;top:430px;width:363px;height:213px;box-sizing:border-box;background:#fdfdfd;border:1px solid #b4b4b4"></div>
<div style="left:3px;top:433px;width:358px;height:183px;box-sizing:border-box;background:#fff;border:1px solid #b0b0b0"></div>
<div style="left:4px;top:435px;width:356px;height:19px;box-sizing:border-box;background:linear-gradient(#f9f9f9,#eee);border-bottom:1px solid #ccc"></div>
<div style="left:104px;top:435px;width:1px;height:18px;background:#ccc"></div>
<span class="t" style="left:7px;top:435px">Property</span>
<span class="t" style="left:107px;top:435px">Value</span>
<div style="left:3px;top:616px;width:53px;height:22px;box-sizing:border-box;background:#e8e8e8;border:1px solid #c4c4c4;border-top:none;border-radius:0 0 3px 3px"></div>
<div style="left:56px;top:616px;width:52px;height:25px;box-sizing:border-box;background:#fdfdfd;border:1px solid #c4c4c4;border-top:none;border-radius:0 0 3px 3px"></div>
<span class="t" style="left:14px;top:618px">View</span>
<span class="t" style="left:67px;top:620px">Data</span>

<!-- report view -->
<span class="t" style="left:4px;top:650px">Report view</span>
<div class="dk" style="left:1339px;top:654px"></div>
<div class="dk" style="left:1353px;top:654px"></div>
<svg class="a" style="left:1354px;top:655px" width="9" height="9"><path d="M1.500 1.500l6 6M7.500 1.500l-6 6" stroke="#444" stroke-width="1.300"/></svg>
<svg class="a" style="left:1340px;top:655px" width="9" height="9"><rect x="1" y="3" width="4" height="4" fill="none" stroke="#666"/><rect x="3" y="1" width="4" height="4" fill="none" stroke="#666"/></svg>
<div style="left:0;top:669px;width:1366px;height:71px;box-sizing:border-box;background:#fff;border:1px solid #b8b8b8"></div>

<!-- status bar -->
<span class="t" style="left:2px;top:745px">Preselected: Rocking_table_2.Body002.PolarPattern.Edge3 (234.236420 mm, -85.539673 mm, 17.200001 mm)</span>
<svg class="a" style="left:1138px;top:747px" width="11" height="15"><rect x="1" y="1" width="9" height="13" rx="4" fill="none" stroke="#444" stroke-width="1.300"/><path d="M5.500 3v3" stroke="#444" stroke-width="1.300"/></svg>
<span class="t" style="left:1153px;top:745px">CAD</span>
<div class="ar" style="left:1187px;top:753px;border-left-width:3px;border-right-width:3px;border-top-width:3px;border-top-color:#888"></div>
<span class="t" style="left:1204px;top:745px;font-size:12.200px">1683,60 mm x 694,74 mm</span>
</body></html>
